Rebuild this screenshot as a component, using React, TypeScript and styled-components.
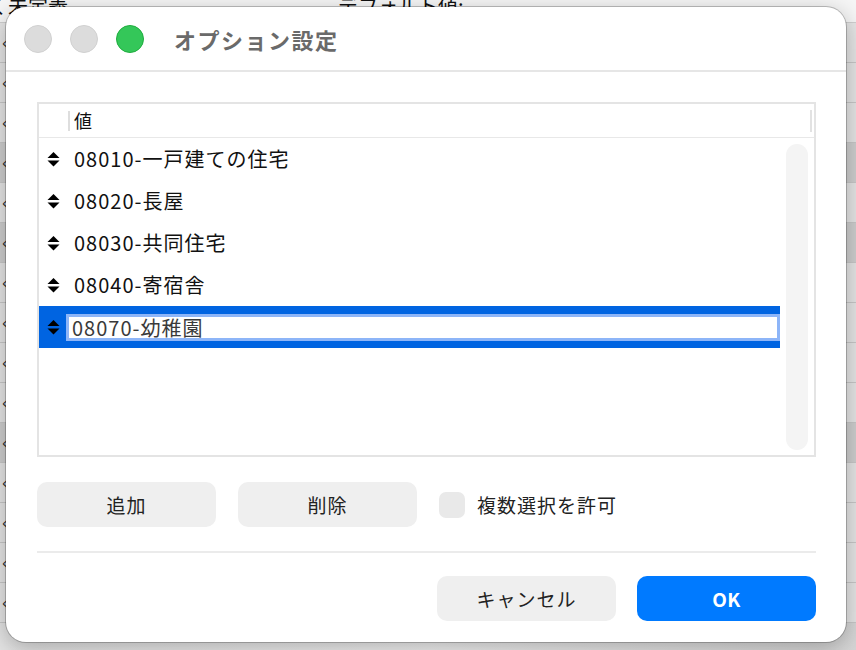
import styled, { createGlobalStyle } from "styled-components";

const GlobalStyle = createGlobalStyle`
  html, body {
    margin: 0;
    padding: 0;
    width: 856px;
    height: 650px;
    overflow: hidden;
    font-family: "Noto Sans CJK JP", "Noto Sans", "Liberation Sans", sans-serif;
    background: #d9d9d9;
  }
`;

const Desktop = styled.div`
  position: relative;
  width: 856px;
  height: 650px;
  overflow: hidden;
  background: linear-gradient(90deg, #e4e4e4 0%, #f2f2f2 50%, #d6d6d6 100%);
`;

const BackTop = styled.div`
  display: flex;
  height: 22px;
  background: #f6f6f6;
  border-bottom: 1px solid #cfcfcf;
  font-size: 20px;
  line-height: 20px;
  color: #111;
  overflow: hidden;
`;

const BackLabel = styled.span<{ $left: number }>`
  margin-left: ${(p) => p.$left}px;
  margin-top: -4px;
  white-space: nowrap;
`;

const BackRows = styled.div`
  display: flex;
  flex-direction: column;
`;

const BackRow = styled.div<{ $dark?: boolean }>`
  height: 40px;
  border-bottom: 1px solid #c8c8c8;
  background: ${(p) => (p.$dark ? "#cfcfcf" : "#e6e6e6")};
  font-size: 14px;
  padding: 10px 0 0 0;
  color: #333;
  box-sizing: border-box;
`;

const Window = styled.div`
  position: absolute;
  left: 6px;
  top: 7px;
  width: 840px;
  height: 635px;
  background: #fff;
  border-radius: 20px;
  box-shadow: 0 0 0 1px rgba(0, 0, 0, 0.22), 0 6px 24px rgba(0, 0, 0, 0.28);
  display: flex;
  flex-direction: column;
  overflow: hidden;
`;

const TitleBar = styled.div`
  height: 63px;
  display: flex;
  align-items: center;
  padding-left: 18px;
  border-bottom: 2px solid #e6e6e6;
  flex-shrink: 0;
`;

const Light = styled.span<{ $color: string; $edge: string }>`
  width: 28px;
  height: 28px;
  border-radius: 50%;
  background: ${(p) => p.$color};
  border: 1px solid ${(p) => p.$edge};
  box-sizing: border-box;
  margin-right: 18px;
`;

const Title = styled.h1`
  margin: 0 0 0 12px;
  font-size: 22px;
  font-weight: 700;
  color: #6a6a6a;
  letter-spacing: 1.5px;
`;

const Body = styled.div`
  flex: 1;
  display: flex;
  flex-direction: column;
  padding: 30px 30px 21px 31px;
`;

const Table = styled.div`
  height: 355px;
  border: 2px solid #e4e4e4;
  box-sizing: border-box;
  display: flex;
  flex-direction: column;
`;

const Header = styled.div`
  height: 33px;
  display: flex;
  align-items: center;
  border-bottom: 1px solid #e8e8e8;
  flex-shrink: 0;
  padding-left: 29px;
  padding-right: 2px;
`;

const HeaderSep = styled.span`
  width: 2px;
  height: 20px;
  background: #dedede;
  margin-right: 4px;
`;

const HeaderText = styled.span`
  flex: 1;
  font-size: 18px;
  color: #111;
  margin-top: -2px;
`;

const HeaderEnd = styled.span`
  width: 2px;
  height: 22px;
  background: #e2e2e2;
`;

const ListArea = styled.div`
  flex: 1;
  display: flex;
  padding-right: 6px;
`;

const Rows = styled.div`
  flex: 1;
  display: flex;
  flex-direction: column;
`;

const Row = styled.div<{ $selected?: boolean }>`
  height: 42px;
  display: flex;
  align-items: center;
  padding-left: 8px;
  padding-bottom: 2px;
  box-sizing: border-box;
  background: ${(p) => (p.$selected ? "#0064e1" : "transparent")};
`;

const Sort = styled.svg`
  width: 13px;
  height: 16px;
  flex-shrink: 0;
  margin-right: 14px;
  margin-top: 2px;
`;

const RowText = styled.span`
  font-size: 20px;
  letter-spacing: 1px;
  color: #111;
  white-space: nowrap;
`;

const EditBox = styled.div`
  flex: 1;
  margin-left: -8px;
  margin-top: 2px;
  height: 27px;
  border: 3px solid #8db5f8;
  box-sizing: border-box;
  background: #fff;
  display: flex;
  align-items: center;
  padding-left: 3px;
  font-size: 20px;
  letter-spacing: 1px;
  color: #3a3a3a;
`;

const Scrollbar = styled.div`
  width: 22px;
  margin: 6px 0 5px 6px;
  border-radius: 11px;
  background: #f4f4f4;
`;

const Controls = styled.div`
  display: flex;
  align-items: center;
  margin-top: 25px;
  gap: 22px;
`;

const Button = styled.button<{ $primary?: boolean }>`
  width: 179px;
  height: 45px;
  border: none;
  border-radius: 10px;
  background: ${(p) => (p.$primary ? "#007aff" : "#efefef")};
  color: ${(p) => (p.$primary ? "#fff" : "#222")};
  font-family: inherit;
  font-size: 19px;
  letter-spacing: ${(p) => (p.$primary ? 0.5 : 1)}px;
  font-weight: ${(p) => (p.$primary ? 700 : 400)};
  padding: 0;
`;

const CheckLabel = styled.label`
  display: flex;
  align-items: center;
  gap: 12px;
  font-size: 19px;
  letter-spacing: 1px;
  color: #222;
`;

const CheckBox = styled.span`
  width: 26px;
  height: 26px;
  border-radius: 7px;
  background: #e9e9e9;
`;

const Divider = styled.div`
  height: 2px;
  background: #ebebeb;
  margin-top: 24px;
`;

const Footer = styled.div`
  display: flex;
  justify-content: flex-end;
  gap: 21px;
  margin-top: 23px;
`;

const items = ["08010-一戸建ての住宅", "08020-長屋", "08030-共同住宅", "08040-寄宿舎"];

function SortIcon() {
  return (
    <Sort viewBox="0 0 13 16">
      <path d="M6.5 1 L12.5 7 H0.5 Z" fill="#000" />
      <path d="M6.5 15.5 L12.5 9.5 H0.5 Z" fill="#000" />
    </Sort>
  );
}

export default function App() {
  return (
    <>
      <GlobalStyle />
      <Desktop>
        <BackTop>
          <BackLabel $left={-12}>く未定義</BackLabel>
          <BackLabel $left={270}>デフォルト値:</BackLabel>
        </BackTop>
        <BackRows>
          <BackRow>く:</BackRow>
          <BackRow>く:</BackRow>
          <BackRow>く:</BackRow>
          <BackRow $dark>く:</BackRow>
          <BackRow>く:</BackRow>
          <BackRow $dark>く:</BackRow>
          <BackRow>く:</BackRow>
          <BackRow>く:</BackRow>
          <BackRow>く:</BackRow>
          <BackRow>く:</BackRow>
          <BackRow $dark>く:</BackRow>
          <BackRow>く:</BackRow>
          <BackRow>く:</BackRow>
          <BackRow>く:</BackRow>
          <BackRow>く:</BackRow>
        </BackRows>

        <Window>
          <TitleBar>
            <Light $color="#dcdcdc" $edge="#d0d0d0" />
            <Light $color="#dcdcdc" $edge="#d0d0d0" />
            <Light $color="#34c759" $edge="#1fad3e" />
            <Title>オプション設定</Title>
          </TitleBar>
          <Body>
            <Table>
              <Header>
                <HeaderSep />
                <HeaderText>値</HeaderText>
                <HeaderEnd />
              </Header>
              <ListArea>
                <Rows>
                  {items.map((t) => (
                    <Row key={t}>
                      <SortIcon />
                      <RowText>{t}</RowText>
                    </Row>
                  ))}
                  <Row $selected>
                    <SortIcon />
                    <EditBox>08070-幼稚園</EditBox>
                  </Row>
                </Rows>
                <Scrollbar />
              </ListArea>
            </Table>
            <Controls>
              <Button>追加</Button>
              <Button>削除</Button>
              <CheckLabel>
                <CheckBox />
                複数選択を許可
              </CheckLabel>
            </Controls>
            <Divider />
            <Footer>
              <Button>キャンセル</Button>
              <Button $primary>OK</Button>
            </Footer>
          </Body>
        </Window>
      </Desktop>
    </>
  );
}
